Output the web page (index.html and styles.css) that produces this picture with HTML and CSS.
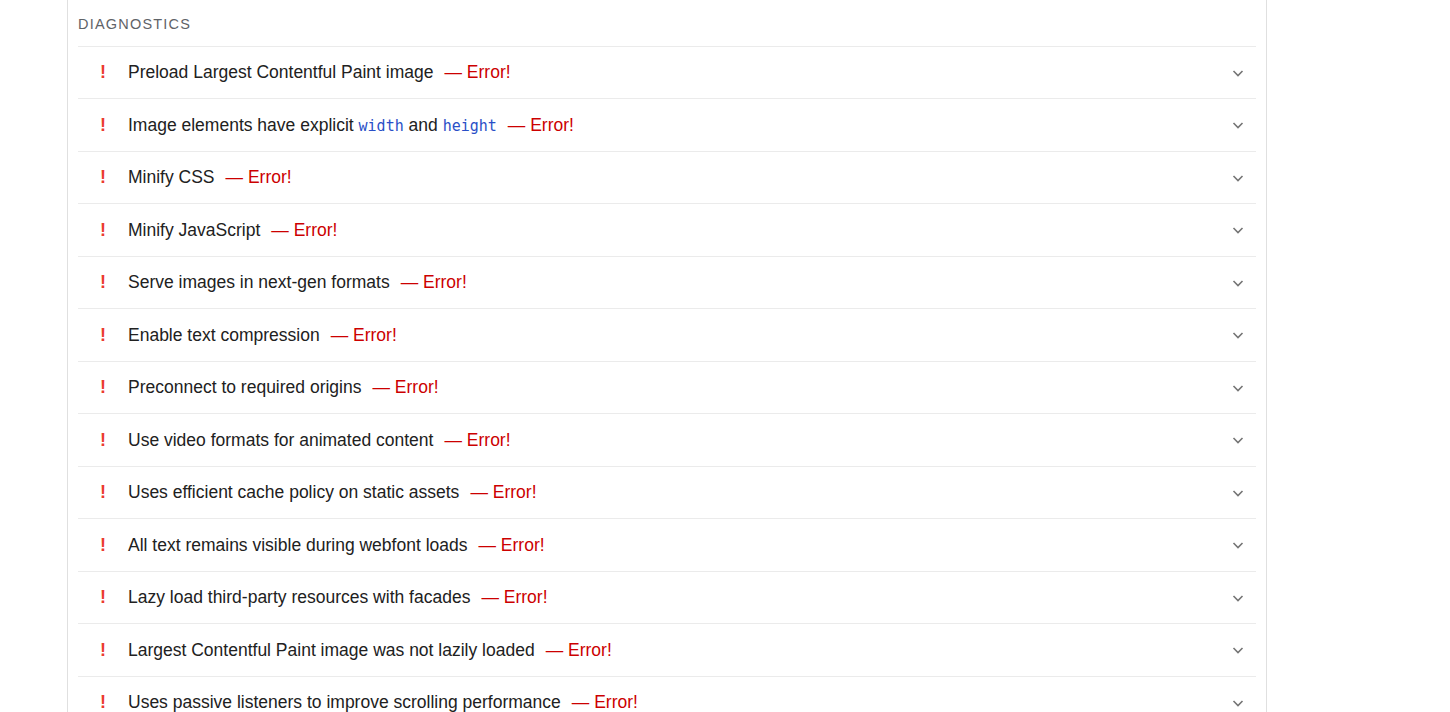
FILE: index.html
```html
<!DOCTYPE html>
<html lang="en">
<head>
  <meta charset="UTF-8" />
  <title>Diagnostics</title>
  <link rel="stylesheet" href="styles.css">
</head>
<body>
  <div class="report">
    <div class="group-title">Diagnostics</div>

    <div class="audit"><span class="icon">!</span><span class="title">Preload Largest Contentful Paint image</span><span class="err">— Error!</span><span class="chev"><svg width="14" height="14" viewBox="0 0 14 14"><path d="M2.5 5l4.5 4.5 4.5-4.5" fill="none" stroke="currentColor" stroke-width="1.6"/></svg></span></div>
    <div class="audit"><span class="icon">!</span><span class="title">Image elements have explicit <code>width</code> and <code>height</code></span><span class="err">— Error!</span><span class="chev"><svg width="14" height="14" viewBox="0 0 14 14"><path d="M2.5 5l4.5 4.5 4.5-4.5" fill="none" stroke="currentColor" stroke-width="1.6"/></svg></span></div>
    <div class="audit"><span class="icon">!</span><span class="title">Minify CSS</span><span class="err">— Error!</span><span class="chev"><svg width="14" height="14" viewBox="0 0 14 14"><path d="M2.5 5l4.5 4.5 4.5-4.5" fill="none" stroke="currentColor" stroke-width="1.6"/></svg></span></div>
    <div class="audit"><span class="icon">!</span><span class="title">Minify JavaScript</span><span class="err">— Error!</span><span class="chev"><svg width="14" height="14" viewBox="0 0 14 14"><path d="M2.5 5l4.5 4.5 4.5-4.5" fill="none" stroke="currentColor" stroke-width="1.6"/></svg></span></div>
    <div class="audit"><span class="icon">!</span><span class="title">Serve images in next-gen formats</span><span class="err">— Error!</span><span class="chev"><svg width="14" height="14" viewBox="0 0 14 14"><path d="M2.5 5l4.5 4.5 4.5-4.5" fill="none" stroke="currentColor" stroke-width="1.6"/></svg></span></div>
    <div class="audit"><span class="icon">!</span><span class="title">Enable text compression</span><span class="err">— Error!</span><span class="chev"><svg width="14" height="14" viewBox="0 0 14 14"><path d="M2.5 5l4.5 4.5 4.5-4.5" fill="none" stroke="currentColor" stroke-width="1.6"/></svg></span></div>
    <div class="audit"><span class="icon">!</span><span class="title">Preconnect to required origins</span><span class="err">— Error!</span><span class="chev"><svg width="14" height="14" viewBox="0 0 14 14"><path d="M2.5 5l4.5 4.5 4.5-4.5" fill="none" stroke="currentColor" stroke-width="1.6"/></svg></span></div>
    <div class="audit"><span class="icon">!</span><span class="title">Use video formats for animated content</span><span class="err">— Error!</span><span class="chev"><svg width="14" height="14" viewBox="0 0 14 14"><path d="M2.5 5l4.5 4.5 4.5-4.5" fill="none" stroke="currentColor" stroke-width="1.6"/></svg></span></div>
    <div class="audit"><span class="icon">!</span><span class="title">Uses efficient cache policy on static assets</span><span class="err">— Error!</span><span class="chev"><svg width="14" height="14" viewBox="0 0 14 14"><path d="M2.5 5l4.5 4.5 4.5-4.5" fill="none" stroke="currentColor" stroke-width="1.6"/></svg></span></div>
    <div class="audit"><span class="icon">!</span><span class="title">All text remains visible during webfont loads</span><span class="err">— Error!</span><span class="chev"><svg width="14" height="14" viewBox="0 0 14 14"><path d="M2.5 5l4.5 4.5 4.5-4.5" fill="none" stroke="currentColor" stroke-width="1.6"/></svg></span></div>
    <div class="audit"><span class="icon">!</span><span class="title">Lazy load third-party resources with facades</span><span class="err">— Error!</span><span class="chev"><svg width="14" height="14" viewBox="0 0 14 14"><path d="M2.5 5l4.5 4.5 4.5-4.5" fill="none" stroke="currentColor" stroke-width="1.6"/></svg></span></div>
    <div class="audit"><span class="icon">!</span><span class="title">Largest Contentful Paint image was not lazily loaded</span><span class="err">— Error!</span><span class="chev"><svg width="14" height="14" viewBox="0 0 14 14"><path d="M2.5 5l4.5 4.5 4.5-4.5" fill="none" stroke="currentColor" stroke-width="1.6"/></svg></span></div>
    <div class="audit"><span class="icon">!</span><span class="title">Uses passive listeners to improve scrolling performance</span><span class="err">— Error!</span><span class="chev"><svg width="14" height="14" viewBox="0 0 14 14"><path d="M2.5 5l4.5 4.5 4.5-4.5" fill="none" stroke="currentColor" stroke-width="1.6"/></svg></span></div>
  </div>
</body>
</html>
```

FILE: styles.css
```css
body {
  margin: 0;
  font-family: 'Liberation Sans', Arial, sans-serif;
  color: #212121;
  background: #fff;
}

.report {
  margin-left: 67px;
  width: 1178px;
  padding: 0 10px;
  border-left: 1px solid #e0e0e0;
  border-right: 1px solid #e0e0e0;
  min-height: 712px;
}

.group-title {
  height: 45.5px;
  line-height: 48px;
  font-size: 14.5px;
  letter-spacing: 1.2px;
  text-transform: uppercase;
  color: #5f6368;
}

.audit {
  display: flex;
  align-items: center;
  height: 52.5px;
  padding-top: 1px;
  border-top: 1px solid #ebebeb;
  box-sizing: border-box;
  font-size: 17.5px;
}

.icon {
  width: 50px;
  padding-left: 22px;
  box-sizing: border-box;
  color: #eb3b2f;
  font-weight: bold;
  font-size: 18px;
}

.title code {
  font-family: 'DejaVu Sans Mono', monospace;
  font-size: 15px;
  color: #2a4fc7;
}

.err {
  margin-left: 11px;
  color: #c00;
}

.chev {
  margin-left: auto;
  margin-right: 11px;
  color: #757575;
  display: flex;
}
```
